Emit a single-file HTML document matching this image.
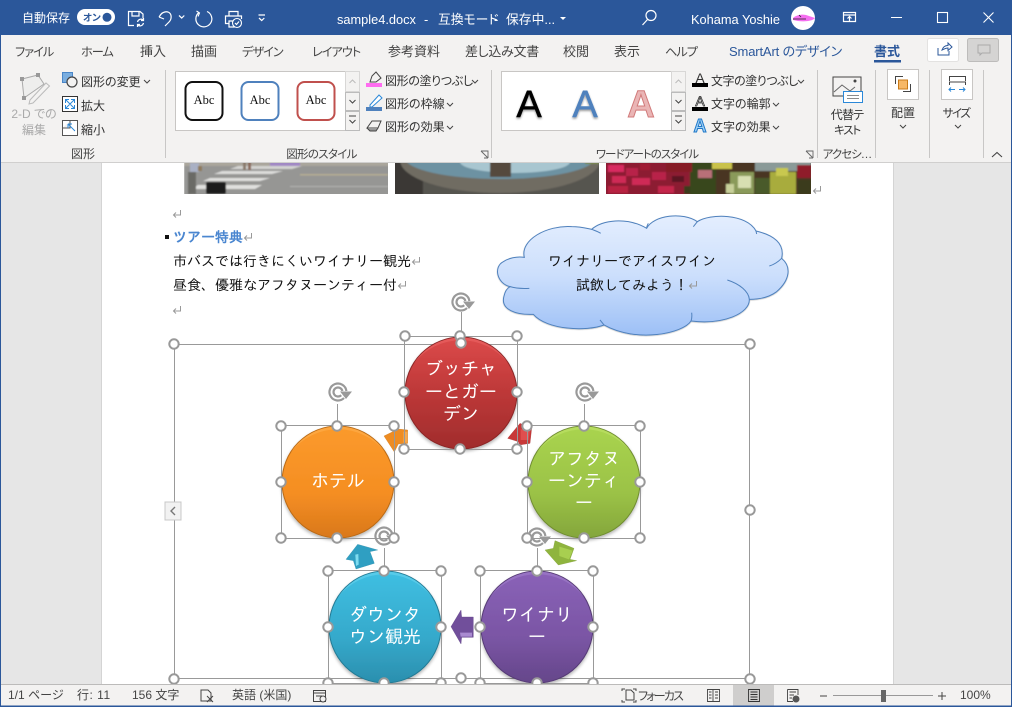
<!DOCTYPE html>
<html lang="ja">
<head>
<meta charset="utf-8">
<title>sample4.docx</title>
<style>
html,body{margin:0;padding:0;width:1012px;height:707px;overflow:hidden;background:#fff}
svg{display:block;position:absolute;left:0;top:0}
text{font-family:"Liberation Sans","Noto Sans CJK JP",sans-serif;fill:#333}
.tab{font-size:13px;fill:#444;font-feature-settings:"palt"}
.kt{font-size:12.2px;letter-spacing:-1px}
.r{font-size:12px;fill:#333;font-feature-settings:"palt"}
.lbl{font-size:12px;fill:#444;text-anchor:middle;font-feature-settings:"palt"}
.doc{font-family:"IPAGothic","Noto Sans CJK JP",sans-serif;font-size:14px;fill:#111}
.cir{font-family:"IPAGothic","Noto Sans CJK JP",sans-serif;font-size:18px;fill:#fff;text-anchor:middle}
.st{font-size:12px;fill:#444;font-feature-settings:"palt"}
.ti{font-size:12.8px;fill:#fff;font-feature-settings:"palt"}
.ic{fill:none;stroke:#444;stroke-width:1.2}
.wi{fill:none;stroke:#fff;stroke-width:1.2}
.chev{fill:none;stroke:#444;stroke-width:1}
</style>
</head>
<body>
<svg width="1012" height="707" viewBox="0 0 1012 707" xmlns="http://www.w3.org/2000/svg">
<defs>
<linearGradient id="gr" x1="0" y1="0" x2="0" y2="1"><stop offset="0" stop-color="#dc4a4a"/><stop offset=".5" stop-color="#bd3838"/><stop offset="1" stop-color="#a02c2c"/></linearGradient>
<linearGradient id="go" x1="0" y1="0" x2="0" y2="1"><stop offset="0" stop-color="#fb9a2c"/><stop offset=".6" stop-color="#f58e22"/><stop offset="1" stop-color="#d9781c"/></linearGradient>
<linearGradient id="gg" x1="0" y1="0" x2="0" y2="1"><stop offset="0" stop-color="#a9d44f"/><stop offset=".6" stop-color="#9bc246"/><stop offset="1" stop-color="#84a63c"/></linearGradient>
<linearGradient id="gb" x1="0" y1="0" x2="0" y2="1"><stop offset="0" stop-color="#3fbfe2"/><stop offset=".6" stop-color="#35a9cb"/><stop offset="1" stop-color="#2b8fae"/></linearGradient>
<linearGradient id="gp" x1="0" y1="0" x2="0" y2="1"><stop offset="0" stop-color="#8a62b8"/><stop offset=".6" stop-color="#7a55a4"/><stop offset="1" stop-color="#65468a"/></linearGradient>
<linearGradient id="gc" x1="0" y1="0" x2="0" y2="1"><stop offset="0" stop-color="#e4eefe"/><stop offset=".5" stop-color="#ccdffc"/><stop offset="1" stop-color="#9dc0f6"/></linearGradient>
<filter id="sh" x="-10%" y="-10%" width="120%" height="125%"><feGaussianBlur in="SourceAlpha" stdDeviation="1.5"/><feOffset dy="2"/><feComponentTransfer><feFuncA type="linear" slope=".3"/></feComponentTransfer><feMerge><feMergeNode/><feMergeNode in="SourceGraphic"/></feMerge></filter>
<filter id="bl" x="-5%" y="-20%" width="110%" height="140%"><feGaussianBlur stdDeviation=".8"/></filter>
<filter id="as" x="-20%" y="-20%" width="140%" height="150%"><feGaussianBlur in="SourceAlpha" stdDeviation="1"/><feOffset dy="1.5"/><feComponentTransfer><feFuncA type="linear" slope=".4"/></feComponentTransfer><feMerge><feMergeNode/><feMergeNode in="SourceGraphic"/></feMerge></filter>
<clipPath id="c1"><rect x="184" y="163" width="204" height="31"/></clipPath>
<clipPath id="c2"><rect x="395" y="163" width="204" height="31"/></clipPath>
<clipPath id="c3"><rect x="606" y="163" width="205" height="31"/></clipPath>
<symbol id="ret" viewBox="0 0 10 10" width="10" height="10"><path d="M8.5 1V6H1.5M4 3.5L1.5 6L4 8.5" fill="none" stroke="#999" stroke-width="1"/></symbol>
<symbol id="rot" viewBox="0 0 26 24" width="26" height="24"><path d="M17 17A8.5 8.5 0 1 1 19.4 10" fill="none" stroke="#999" stroke-width="2.2"/><path d="M14.2 14.2A4.5 4.5 0 1 1 15.4 10" fill="none" stroke="#999" stroke-width="2.2"/><path d="M13 10.5H25L19 18Z" fill="#999"/></symbol>
</defs>

<!-- document background -->
<rect x="0" y="163" width="1012" height="522" fill="#e6e6e6"/>
<rect x="102" y="163" width="791" height="522" fill="#fff"/>
<rect x="101" y="163" width="1" height="522" fill="#d4d4d4"/>
<rect x="893" y="163" width="1" height="522" fill="#d4d4d4"/>

<!-- photo 1: street -->
<g clip-path="url(#c1)"><g filter="url(#bl)">
<rect x="184" y="160" width="208" height="36" fill="#969694"/>
<rect x="184" y="160" width="208" height="6" fill="#aaa69c"/>
<rect x="270" y="161" width="30" height="5" fill="#a088c4"/>
<rect x="300" y="174" width="88" height="1.5" fill="#b5ae92"/>
<rect x="290" y="186" width="98" height="1" fill="#b4b4b2"/>
<path d="M238 166H302L292 169H230Z" fill="#d4d4d2"/>
<path d="M222 171H283L272 174H214Z" fill="#dcdcda"/>
<path d="M210 178H270L260 181H203Z" fill="#e0e0de"/>
<path d="M198 185H262L255 189H192Z" fill="#e0e0de"/>
<rect x="190" y="163" width="9" height="9" fill="#a9b0c4"/>
<rect x="198" y="166" width="4" height="5" fill="#8f7a5c"/>
<rect x="188" y="172" width="8" height="22" fill="#6a6a66"/>
<rect x="206" y="182" width="20" height="12" rx="2" fill="#1a1a1c"/>
<rect x="243" y="160" width="3" height="10" fill="#8a7a6c"/><rect x="248" y="160" width="3" height="10" fill="#8a6a5c"/>
</g></g>

<!-- photo 2: fountain -->
<g clip-path="url(#c2)"><g filter="url(#bl)">
<rect x="393" y="160" width="208" height="36" fill="#575550"/>
<rect x="393" y="160" width="30" height="36" fill="#3a3834"/>
<ellipse cx="500" cy="160" rx="100" ry="33" fill="#6f6c62"/>
<ellipse cx="500" cy="158" rx="95" ry="21" fill="#6d92a2"/>
<ellipse cx="515" cy="162" rx="55" ry="11" fill="#a8c6d0"/>
<rect x="490" y="160" width="21" height="17" fill="#544a3e"/>
<rect x="585" y="160" width="14" height="4" fill="#7a8a4e"/>
</g></g>

<!-- photo 3: flowers -->
<g clip-path="url(#c3)"><g filter="url(#bl)">
<rect x="604" y="160" width="209" height="36" fill="#4a3424"/>
<rect x="604" y="160" width="88" height="36" fill="#8c1a30"/>
<rect x="608" y="165" width="16" height="7" fill="#d82c60"/><rect x="626" y="168" width="12" height="8" fill="#b8224a"/>
<rect x="612" y="176" width="14" height="7" fill="#cf2a56"/><rect x="632" y="178" width="18" height="7" fill="#cf2c56"/>
<rect x="608" y="186" width="20" height="7" fill="#b82242"/><rect x="640" y="164" width="10" height="6" fill="#a01e36"/>
<rect x="652" y="172" width="14" height="8" fill="#b8244a"/><rect x="658" y="186" width="16" height="7" fill="#c4284c"/>
<rect x="672" y="176" width="12" height="6" fill="#5a1620"/><rect x="684" y="186" width="10" height="8" fill="#3a3a1e"/>
<rect x="690" y="160" width="26" height="36" fill="#38461f"/>
<rect x="666" y="162" width="26" height="10" fill="#861a26"/>
<rect x="698" y="170" width="14" height="8" fill="#b87078"/>
<rect x="712" y="160" width="20" height="9" fill="#c9c24c"/>
<rect x="730" y="172" width="24" height="22" fill="#8a9a5a"/><rect x="738" y="176" width="13" height="12" fill="#d8dfb2"/>
<rect x="726" y="184" width="8" height="9" fill="#c8d09a"/>
<rect x="755" y="160" width="56" height="11" fill="#8a9a98"/>
<rect x="770" y="172" width="26" height="22" fill="#a8ac3c"/><rect x="776" y="168" width="12" height="8" fill="#c8c850"/>
<rect x="755" y="178" width="15" height="16" fill="#4a5a2c"/>
<rect x="797" y="165" width="14" height="13" fill="#8f1f2a"/>
<rect x="798" y="180" width="13" height="14" fill="#3a3a1f"/>
</g></g>
<use href="#ret" x="812" y="185"/>

<!-- document text -->
<use href="#ret" x="172" y="209"/>
<rect x="165" y="235" width="4" height="4" fill="#111"/>
<text x="173" y="242" style="font-size:14px;font-weight:bold;fill:#4a86d0;font-family:'IPAGothic','Noto Sans CJK JP',sans-serif">ツアー特典</text>
<use href="#ret" x="243" y="232"/>
<text x="173" y="266" class="doc">市バスでは行きにくいワイナリー観光</text>
<use href="#ret" x="411" y="256"/>
<text x="173" y="290" class="doc">昼食、優雅なアフタヌーンティー付</text>
<use href="#ret" x="397" y="280"/>
<use href="#ret" x="172" y="305"/>

<!-- cloud -->
<g transform="translate(480,160) scale(.33333)">
<path filter="url(#sh)" d="M133 292C120 240 200 195 275 200C300 200 320 205 335 208C365 180 440 170 500 205C520 165 610 155 652 185C690 160 800 160 828 213C880 225 915 250 905 295C935 320 930 360 890 395C870 410 840 418 808 418C810 460 730 495 633 483C610 520 470 550 372 495C320 515 200 510 160 463C110 465 60 450 72 408C75 395 80 385 90 380C50 370 40 320 70 305C85 295 110 288 133 292Z" fill="url(#gc)" stroke="#4f81bd" stroke-width="3"/>
<path d="M90 380C110 386 130 386 148 385M335 208C345 212 355 215 362 220M500 205C500 200 502 195 505 190M652 185C648 190 644 195 640 200M828 213L830 222M905 295C895 305 882 314 868 318M808 418C806 395 780 372 742 360M633 483C636 475 636 466 635 458M372 495C368 490 364 485 360 480" fill="none" stroke="#4f81bd" stroke-width="3"/>
</g>
<text x="632" y="266" class="doc" text-anchor="middle">ワイナリーでアイスワイン</text>
<text x="632" y="290" class="doc" text-anchor="middle">試飲してみよう！</text>
<use href="#ret" x="688" y="280"/>

<!-- SmartArt frame -->
<rect x="174.5" y="344.500" width="575" height="334" fill="none" stroke="#999" stroke-width="1"/>

<!-- rotate stems -->
<g stroke="#999" stroke-width="1">
<path d="M461.5 312V337M337.5 404V426M584.5 404V426M384.5 548V571M537.5 548V571"/>
</g>

<!-- circles -->
<g stroke-width="1">
<circle cx="461" cy="393" r="56" fill="url(#gr)" stroke="#8a2626" filter="url(#sh)"/>
<path d="M414 363A56 56 0 0 1 508 363A60 60 0 0 0 414 363Z" fill="#ef6a6a" opacity=".5"/>
<circle cx="338" cy="482" r="56" fill="url(#go)" stroke="#b96a16" filter="url(#sh)"/>
<path d="M291 452A56 56 0 0 1 385 452A60 60 0 0 0 291 452Z" fill="#ffb354" opacity=".5"/>
<circle cx="584" cy="482" r="56" fill="url(#gg)" stroke="#6f8c30" filter="url(#sh)"/>
<path d="M537 452A56 56 0 0 1 631 452A60 60 0 0 0 537 452Z" fill="#c4e66e" opacity=".5"/>
<circle cx="385" cy="627" r="56" fill="url(#gb)" stroke="#247a94" filter="url(#sh)"/>
<path d="M338 597A56 56 0 0 1 432 597A60 60 0 0 0 338 597Z" fill="#6fd8f2" opacity=".5"/>
<circle cx="537" cy="627" r="56" fill="url(#gp)" stroke="#553a74" filter="url(#sh)"/>
<path d="M490 597A56 56 0 0 1 584 597A60 60 0 0 0 490 597Z" fill="#a684d0" opacity=".5"/>
</g>

<!-- arrows -->
<g transform="translate(270,330) scale(.33333)">
<path d="M342 318L385 297L413 300V340L385 342L373 366Z" fill="#ee8c22" stroke="#c87418"/>
<path d="M400 305H412V338H400Z" fill="#f7a94e"/>
<path d="M713 325L750 280L785 295L780 340L748 345L745 335Z" fill="#c83838" stroke="#a02c2c"/>
<path d="M752 298H780L776 330H752Z" fill="#e04e4e"/>
</g>
<g transform="translate(270,520) scale(.33333)">
<path d="M825 90L850 85L855 62L912 85L900 118L920 122L865 135Z" fill="#8fb43e" stroke="#7b9c34"/>
<path d="M868 80L908 92L897 118L868 108Z" fill="#a8cf50"/>
<path d="M228 118L263 73L323 90L300 95L313 130L258 147L250 122Z" fill="#2f9fc2" stroke="#2788a6"/>
<path d="M256 104L265 102L266 134L258 138Z" fill="#7fdcf0"/>
<path d="M543 320L573 270L575 291H610V352H575L573 372Z" fill="#714f9b" stroke="#5d4182"/>
<path d="M570 338H606V350H572Z" fill="#a98ad0"/>
</g>

<!-- circle text -->
<text x="461" y="375" class="cir">ブッチャ</text>
<text x="461" y="398" class="cir">ーとガー</text>
<text x="461" y="420" class="cir">デン</text>
<text x="338" y="487" class="cir">ホテル</text>
<text x="584" y="465" class="cir">アフタヌ</text>
<text x="584" y="487" class="cir">ーンティ</text>
<text x="584" y="509" class="cir">ー</text>
<text x="385" y="621" class="cir">ダウンタ</text>
<text x="385" y="643" class="cir">ウン観光</text>
<text x="537" y="621" class="cir">ワイナリ</text>
<text x="537" y="643" class="cir">ー</text>

<!-- selection boxes -->
<g fill="none" stroke="#999" stroke-width="1">
<rect x="404.5" y="336.5" width="113" height="113"/>
<rect x="281.5" y="425.5" width="113" height="113"/>
<rect x="527.5" y="425.5" width="113" height="113"/>
<rect x="328.5" y="570.5" width="113" height="113"/>
<rect x="480.5" y="570.5" width="113" height="113"/>
</g>

<!-- rotation handles -->
<use href="#rot" x="450" y="291"/>
<use href="#rot" x="327" y="381"/>
<use href="#rot" x="574" y="381"/>
<use href="#rot" x="373" y="525"/>
<use href="#rot" x="526" y="526"/>

<!-- handles -->
<g fill="#fff" stroke="#999" stroke-width="2">
<circle cx="174" cy="344" r="4.7"/><circle cx="750" cy="344" r="4.7"/><circle cx="174" cy="679" r="4.7"/><circle cx="750" cy="679" r="4.7"/><circle cx="750" cy="510" r="4.7"/><circle cx="461" cy="678" r="4.7"/>
<circle cx="405" cy="336" r="4.7"/><circle cx="460" cy="336" r="4.7"/><circle cx="517" cy="336" r="4.7"/><circle cx="461" cy="343" r="4.7"/><circle cx="404" cy="392" r="4.7"/><circle cx="517" cy="392" r="4.7"/><circle cx="404" cy="449" r="4.7"/><circle cx="460" cy="449" r="4.7"/><circle cx="517" cy="449" r="4.7"/>
<circle cx="281" cy="426" r="4.7"/><circle cx="337" cy="426" r="4.7"/><circle cx="394" cy="426" r="4.7"/><circle cx="281" cy="482" r="4.7"/><circle cx="394" cy="482" r="4.7"/><circle cx="281" cy="538" r="4.7"/><circle cx="337" cy="538" r="4.7"/><circle cx="394" cy="538" r="4.7"/>
<circle cx="527" cy="426" r="4.7"/><circle cx="584" cy="426" r="4.7"/><circle cx="640" cy="426" r="4.7"/><circle cx="527" cy="482" r="4.7"/><circle cx="640" cy="482" r="4.7"/><circle cx="527" cy="538" r="4.7"/><circle cx="584" cy="538" r="4.7"/><circle cx="640" cy="538" r="4.7"/>
<circle cx="328" cy="571" r="4.7"/><circle cx="384" cy="571" r="4.7"/><circle cx="441" cy="571" r="4.7"/><circle cx="328" cy="627" r="4.7"/><circle cx="441" cy="627" r="4.7"/><circle cx="328" cy="683" r="4.7"/><circle cx="384" cy="683" r="4.7"/><circle cx="441" cy="683" r="4.7"/>
<circle cx="480" cy="571" r="4.7"/><circle cx="537" cy="571" r="4.7"/><circle cx="593" cy="571" r="4.7"/><circle cx="480" cy="627" r="4.7"/><circle cx="593" cy="627" r="4.7"/><circle cx="480" cy="683" r="4.7"/><circle cx="537" cy="683" r="4.7"/><circle cx="593" cy="683" r="4.7"/>
</g>

<!-- text pane toggle -->
<rect x="165" y="502" width="16" height="18" fill="#f2f2f2" stroke="#c8c8c8"/>
<path d="M175 507L171 511L175 515" fill="none" stroke="#777" stroke-width="1.4"/>

<!-- title bar -->
<rect x="0" y="0" width="1012" height="35" fill="#2b579a"/>
<text x="22" y="22" style="font-size:12px;fill:#fff">自動保存</text>
<rect x="77" y="9" width="38" height="16" rx="8" fill="#fff"/>
<text x="83" y="21" style="font-size:9.5px;fill:#2b579a;font-weight:bold;font-feature-settings:'palt'">オン</text>
<circle cx="107" cy="17.3" r="4.5" fill="#2b579a"/>
<!-- save -->
<path class="wi" d="M134 25.5H128.5V11.5H140L143 14V18M132 11.5V16H139V11.5"/>
<path class="wi" d="M137.5 22A3.7 3.7 0 0 1 143.5 20M143.5 23A3.7 3.7 0 0 1 137.5 25M143.5 18V20.5H141M137.5 27V24.5H140"/>
<!-- undo -->
<path d="M159 17L162 13M159 17L164 19M159.5 16.5C161 13 165 11 168 12C172 13.5 172 19 169 22L165 26" fill="none" stroke="#fff" stroke-width="1.2"/>
<path d="M179 15.5L181.7 18L184.3 15.5" class="wi"/>
<!-- redo -->
<path d="M199 12.5A8 8 0 1 0 207 11.5" fill="none" stroke="#fff" stroke-width="1.2"/>
<path d="M196.5 11L199.5 13L198 16.5" fill="none" stroke="#fff" stroke-width="1.1"/>
<!-- print preview -->
<path class="wi" d="M229 16V11.5H238V16M229 23.5H225.5V16H241.5V19M229 21H234V27H229Z"/>
<circle cx="237" cy="23" r="4.5" fill="#2b579a" stroke="#fff" stroke-width="1.1"/>
<path d="M235 23L236.5 24.5L239 21.5" class="wi"/>
<!-- customize -->
<path d="M258.5 15H265M259 18L261.7 20.5L264.3 18" class="wi"/>
<text x="337" y="24" class="ti">sample4.docx</text>
<text x="424" y="24" class="ti">-</text>
<text x="438" y="24" class="ti">互換モード</text>
<text x="494" y="24" class="ti">-</text>
<text x="506" y="24" class="ti">保存中...</text>
<path d="M560 17H566L563 20Z" fill="#fff"/>
<!-- search -->
<circle cx="651" cy="15.5" r="5" class="wi"/><path d="M647.5 19.5L642.5 25" class="wi"/>
<text x="691" y="24" class="ti">Kohama Yoshie</text>
<circle cx="803" cy="18" r="12" fill="#fff"/>
<path d="M793 18C796 15 802 14 806 15L815 18C812 22 800 22 793 20Z" fill="#f56ef0"/>
<path d="M793 19H806M799 15L801 17" stroke="#222" stroke-width=".8"/>
<!-- ribbon display -->
<path class="wi" d="M843.5 12.5H855.5V21.5H843.5ZM843.5 15H855.5M849.5 21V17M847.5 18.5L849.5 16.5L851.5 18.5"/>
<path d="M891 17.5H902" stroke="#fff" stroke-width="1"/>
<rect x="937.5" y="12.5" width="10" height="10" fill="none" stroke="#fff" stroke-width="1.1"/>
<path d="M983.5 12.5L993.5 22.5M993.5 12.5L983.5 22.5" stroke="#fff" stroke-width="1.1"/>

<!-- ribbon -->
<rect x="0" y="35" width="1012" height="128" fill="#f3f2f1"/>
<rect x="0" y="162" width="1012" height="1" fill="#d0cfce"/>
<text x="15" y="56" class="tab kt">ファイル</text>
<text x="81" y="56" class="tab kt">ホーム</text>
<text x="140" y="56" class="tab">挿入</text>
<text x="191" y="56" class="tab">描画</text>
<text x="242" y="56" class="tab kt">デザイン</text>
<text x="312" y="56" class="tab kt">レイアウト</text>
<text x="388" y="56" class="tab">参考資料</text>
<text x="465" y="56" class="tab" style="letter-spacing:-.3px">差し込み文書</text>
<text x="563" y="56" class="tab">校閲</text>
<text x="614" y="56" class="tab">表示</text>
<text x="665" y="56" class="tab kt">ヘルプ</text>
<text x="729" y="56" class="tab" style="fill:#2b579a;letter-spacing:-.15px">SmartArt のデザイン</text>
<text x="874" y="56" class="tab" style="fill:#2b579a;font-weight:bold">書式</text>
<rect x="874" y="60" width="27" height="2.5" fill="#2b579a"/>
<rect x="927.5" y="38.5" width="31" height="23" rx="2" fill="#fff" stroke="#e3e2e1"/>
<path d="M938 48V55H949V51M942 50C943 47 945 45.5 948 45.5V43L952 47L948 50.5V48C946 48 944 49 942 50Z" fill="none" stroke="#2b579a" stroke-width="1"/>
<rect x="967.5" y="38.5" width="31" height="23" rx="2" fill="#d5d4d3" stroke="#bdbcbb"/>
<path d="M978 45H990V53H982L980 55V53H978Z" fill="none" stroke="#aaa" stroke-width="1"/>

<!-- group separators -->
<g fill="#c8c7c6">
<rect x="165" y="70" width="1" height="88"/><rect x="491" y="70" width="1" height="88"/><rect x="817" y="70" width="1" height="88"/><rect x="875" y="70" width="1" height="88"/><rect x="929" y="70" width="1" height="88"/><rect x="983" y="70" width="1" height="88"/>
</g>

<!-- 2-D edit -->
<path d="M22 79L38 75L44 84L24 98Z" fill="#eeeeed" stroke="#aaa" stroke-width="1"/>
<rect x="20" y="77" width="4" height="4" fill="#999"/><rect x="36" y="73" width="4" height="4" fill="#999"/><rect x="22" y="96" width="4" height="4" fill="#999"/>
<path d="M30 100L46 83L49.5 86L33 103L29 104Z" fill="#f3f2f1" stroke="#bbb"/>
<text x="34" y="118" class="lbl" style="fill:#aaa">2-D での</text>
<text x="34" y="134" class="lbl" style="fill:#aaa">編集</text>
<rect x="62.5" y="72.5" width="10" height="10" fill="#7aaee0" stroke="#4a86c8"/>
<circle cx="72" cy="82" r="5" fill="#f3f2f1" stroke="#444" stroke-width="1.2"/>
<text x="81" y="86" class="r">図形の変更</text>
<path d="M144 80L147 83L150 80" class="chev"/>
<rect x="62.5" y="96.5" width="15" height="15" fill="#fff" stroke="#333"/>
<path d="M66 100L74 108M74 100L66 108M65.5 103V99.5H69M71 99.5H74.5V103M74.5 105V108.5H71M69 108.5H65.5V105" fill="none" stroke="#2b88d8" stroke-width="1"/>
<text x="81" y="110" class="r">拡大</text>
<path d="M62.5 128V120.5H70M70 120.5H77.5V135.5H62.5V128H70V120.5" fill="#fff" stroke="#555"/>
<path d="M68 124L75 131M68 124H72M68 124V128" fill="none" stroke="#2b88d8" stroke-width="1"/>
<text x="81" y="134" class="r">縮小</text>
<text x="83" y="158" class="lbl">図形</text>

<!-- shape styles gallery -->
<rect x="175.5" y="71.5" width="184" height="59" fill="#fff" stroke="#c8c6c4"/>
<rect x="345.5" y="71.5" width="14" height="20" fill="#f3f2f1" stroke="#d8d7d6"/>
<rect x="345.5" y="92.5" width="14" height="18" fill="#f3f2f1" stroke="#bbb"/>
<rect x="345.5" y="111.5" width="14" height="19" fill="#f3f2f1" stroke="#bbb"/>
<path d="M349.5 83L352.5 80L355.5 83" fill="none" stroke="#bbb"/>
<path d="M349.5 100L352.5 103L355.5 100" class="chev"/>
<path d="M349 116H356M349.5 120L352.5 123L355.5 120" class="chev"/>
<rect x="185.5" y="82" width="37" height="38" rx="7" fill="#fff" stroke="#111" stroke-width="2"/>
<rect x="241.5" y="82" width="37" height="38" rx="7" fill="#fff" stroke="#4f81bd" stroke-width="2"/>
<rect x="297.5" y="82" width="37" height="38" rx="7" fill="#fff" stroke="#c0504d" stroke-width="2"/>
<text x="204" y="104" style="font-size:12.5px;text-anchor:middle;font-family:'Liberation Serif',serif;fill:#111">Abc</text>
<text x="260" y="104" style="font-size:12.5px;text-anchor:middle;font-family:'Liberation Serif',serif;fill:#111">Abc</text>
<text x="316" y="104" style="font-size:12.5px;text-anchor:middle;font-family:'Liberation Serif',serif;fill:#111">Abc</text>
<!-- fill -->
<path d="M372 76L376 72L381 78L376 82H370Z" fill="#f3f2f1" stroke="#444"/>
<rect x="366" y="83" width="16" height="4" fill="#ff6cf0"/>
<text x="385" y="85" class="r" style="letter-spacing:-.35px">図形の塗りつぶし</text>
<path d="M472 80L475 83L478 80" class="chev"/>
<path d="M370 105L379 95L382 98L372 107H370Z" fill="#fff" stroke="#2b88d8"/>
<rect x="366" y="107" width="16" height="4" fill="#4f81bd"/>
<text x="385" y="108" class="r">図形の枠線</text>
<path d="M447 103L450 106L453 103" class="chev"/>
<path d="M367 128L372 121H381L378 128Z" fill="#f3f2f1" stroke="#444"/>
<path d="M367 128L370 131H376L378 128" fill="#999" stroke="#444"/>
<text x="385" y="131" class="r">図形の効果</text>
<path d="M447 126L450 129L453 126" class="chev"/>
<text x="321.5" y="158" class="lbl" style="font-size:11.5px;letter-spacing:-.7px">図形のスタイル</text>
<path d="M481 151H488V158M481 151L488 158M484 158H488" fill="none" stroke="#666" stroke-width=".9"/>

<!-- wordart gallery -->
<rect x="501.5" y="71.5" width="184" height="59" fill="#fff" stroke="#c8c6c4"/>
<rect x="671.5" y="71.5" width="14" height="20" fill="#f3f2f1" stroke="#d8d7d6"/>
<rect x="671.5" y="92.5" width="14" height="18" fill="#f3f2f1" stroke="#bbb"/>
<rect x="671.5" y="111.5" width="14" height="19" fill="#f3f2f1" stroke="#bbb"/>
<path d="M675.5 83L678.5 80L681.5 83" fill="none" stroke="#bbb"/>
<path d="M675.5 100L678.5 103L681.5 100" class="chev"/>
<path d="M675 116H682M675.5 120L678.5 123L681.5 120" class="chev"/>
<text x="529" y="117" filter="url(#as)" style="font-size:38px;fill:#000;stroke:#000;stroke-width:.5;text-anchor:middle">A</text>
<text x="585" y="117" filter="url(#as)" style="font-size:38px;fill:#4f81bd;stroke:#4f81bd;stroke-width:.5;text-anchor:middle">A</text>
<text x="641" y="117" style="font-size:38px;font-weight:bold;fill:#eab5b5;stroke:#d17a7a;stroke-width:1;text-anchor:middle">A</text>
<text x="700" y="83" style="font-size:14px;fill:#333;text-anchor:middle">A</text>
<rect x="692" y="83" width="16" height="4" fill="#000"/>
<text x="711" y="85" class="r" style="letter-spacing:-.45px">文字の塗りつぶし</text>
<path d="M798 80L801 83L804 80" class="chev"/>
<text x="700" y="106" style="font-size:14px;fill:#fff;stroke:#333;stroke-width:.8;text-anchor:middle">A</text>
<rect x="692" y="107" width="16" height="4" fill="#000"/>
<text x="711" y="108" class="r">文字の輪郭</text>
<path d="M773 103L776 106L779 103" class="chev"/>
<text x="700" y="132" style="font-size:18px;font-weight:bold;fill:#9fd0f5;stroke:#1f78c8;stroke-width:1;text-anchor:middle">A</text>
<text x="711" y="131" class="r">文字の効果</text>
<path d="M773 126L776 129L779 126" class="chev"/>
<text x="647" y="158" class="lbl" style="font-size:11.5px;letter-spacing:-1px">ワードアートのスタイル</text>
<path d="M806 151H813V158M806 151L813 158M809 158H813" fill="none" stroke="#666" stroke-width=".9"/>

<!-- alt text -->
<path d="M861 96V77H833V96H843" fill="#f3f2f1" stroke="#444"/>
<path d="M834 92L842 85L850 91L855 87" fill="none" stroke="#666"/>
<circle cx="855" cy="81" r="1.5" fill="#444"/>
<rect x="843.5" y="91.5" width="19" height="11" fill="#fff" stroke="#2b88d8"/>
<path d="M847 95.5H859M847 98.5H859" stroke="#666" stroke-width=".8"/>
<text x="847" y="119" class="lbl" style="fill:#333;letter-spacing:-.8px">代替テ</text>
<text x="847" y="134" class="lbl" style="fill:#333;font-size:11.5px;letter-spacing:-1.2px">キスト</text>
<text x="847" y="158" class="lbl" style="font-size:11.5px;letter-spacing:-1px">アクセシ…</text>

<!-- arrange -->
<rect x="887.5" y="69.5" width="31" height="30" fill="#fff" stroke="#c8c6c4"/>
<path d="M895.5 84V76.5H903M910.5 84V91.5H903" fill="none" stroke="#444"/>
<rect x="898.5" y="80" width="9" height="9" fill="#f7b867" stroke="#c87a18"/>
<text x="903" y="117" class="lbl" style="fill:#333">配置</text>
<path d="M900 125L903 128L906 125" class="chev"/>

<!-- size -->
<rect x="941.5" y="69.5" width="31" height="30" fill="#fff" stroke="#c8c6c4"/>
<path d="M949.5 81V76.5H965.5V81M949.5 85V82H965.5V85" fill="none" stroke="#444"/>
<path d="M949 89.5H955M959 89.5H965M951 87.5L949 89.5L951 91.5M963 87.5L965 89.5L963 91.5" fill="none" stroke="#2b88d8"/>
<text x="956" y="117" class="lbl" style="fill:#333;font-size:11.5px;letter-spacing:-1.5px">サイズ</text>
<path d="M955 125L958 128L961 125" class="chev"/>
<path d="M992 157L997 152.5L1002 157" fill="none" stroke="#444" stroke-width="1.1"/>

<!-- status bar -->
<rect x="0" y="684" width="1012" height="22" fill="#f3f2f1"/>
<rect x="0" y="684" width="1012" height="1" fill="#bcbbba"/>
<rect x="733" y="685" width="41" height="21" fill="#cfcecd"/>
<text x="8" y="699" class="st">1/1 ページ</text>
<text x="77" y="699" class="st" style="letter-spacing:.5px">行: 11</text>
<text x="132" y="699" class="st">156 文字</text>
<path d="M201 690H208L211 693V701H201Z" fill="none" stroke="#444"/>
<path d="M207 696L213 702M213 696L207 702" stroke="#444"/>
<text x="232" y="699" class="st">英語 (米国)</text>
<rect x="313.5" y="690.5" width="12" height="11" fill="none" stroke="#444"/>
<path d="M313 693H326M316 696H322" stroke="#444"/>
<circle cx="323" cy="699" r="3" fill="#f3f2f1" stroke="#444"/>
<path d="M622 691V689H625M633 689H636V691M622 700V702H625M633 702H636V700" fill="none" stroke="#444"/>
<path d="M626 690H631L634 693V700H626Z" fill="none" stroke="#444"/>
<text x="638" y="700" class="st" style="letter-spacing:-1.8px">フォーカス</text>
<path d="M707.5 689.5H713V701.5H707.5ZM713 689.5H719.5V701.5H713Z M709 692H711.5M709 695H711.5M709 698H711.5M715 692H718M715 695H718M715 698H718" fill="none" stroke="#444" stroke-width=".9"/>
<path d="M748.5 689.5H759.5V701.5H748.5ZM750.5 692H757.5M750.5 694.5H757.5M750.5 697H757.5M750.5 699.5H757.5" fill="none" stroke="#333" stroke-width=".9"/>
<path d="M787.5 689.5H798V695M787.5 689.5V701.5H793M789.5 692H796M789.5 695H794M789.5 698H792" fill="none" stroke="#444" stroke-width=".9"/>
<circle cx="796" cy="699" r="3.5" fill="#555"/>
<path d="M820 696H827" stroke="#444"/>
<rect x="833" y="695" width="100" height="1" fill="#999"/>
<rect x="881" y="690" width="5" height="12" fill="#666"/>
<path d="M938 696H946M942 692V700" stroke="#444"/>
<text x="960" y="699" class="st">100%</text>

<!-- window edge -->
<rect x="0" y="705.5" width="1012" height="1.5" fill="#2b579a"/>
<rect x="0" y="0" width="1" height="707" fill="#2b579a"/>
<rect x="1011" y="0" width="1" height="707" fill="#2b579a"/>
</svg>
</body>
</html>
